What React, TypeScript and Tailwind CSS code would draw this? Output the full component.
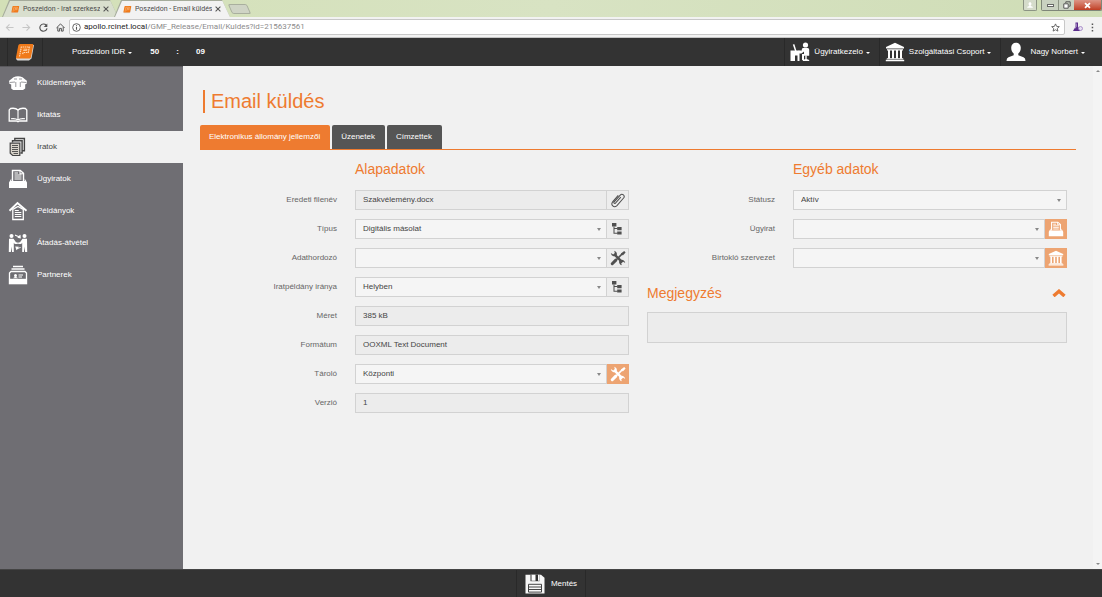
import type { ReactNode } from "react";

type IconProps = { className?: string };
type IconType = (props: IconProps) => ReactNode;

const box = "shrink-0";

function Svg({ className = "size-5", children, view = "0 0 20 20" }: IconProps & { children: ReactNode; view?: string }) {
  return (
    <svg viewBox={view} className={`${box} ${className}`} fill="none" stroke="currentColor" strokeWidth="1.4" aria-hidden="true">
      {children}
    </svg>
  );
}

const LogoIcon: IconType = ({ className }) => (
  <Svg className={className}>
    <path d="M5 3.500 19 3l-2.500 13.500L14 18.500H2.500L1 17z" fill="#d9d9d9" stroke="none" />
    <path d="M5 2h12.500q1 0 .8 1l-2.300 12q-.3 1.500-1.500 1.500H2q-1.200 0-1-1.200L3.300 3.500Q3.600 2 5 2z" fill="#f07a1a" stroke="none" />
    <path d="M4.500 14.500 6.300 5h8l-1 5.500H8l-.4 2" stroke="#ffd9b5" strokeWidth="1.200" strokeDasharray="1.500 .7" />
    <path d="M8.500 7.200h3.500l-.3 1.300H8.200" stroke="#ffd9b5" strokeWidth=".8" />
  </Svg>
);

const DeskIcon: IconType = ({ className }) => (
  <Svg className={className}>
    <g fill="currentColor" stroke="none">
      <circle cx="15.500" cy="3" r="2.600" />
      <path d="M12.500 6h5.200q1.500 0 1.500 1.700v6h-5.200v4.300h-2v-6h2V9.500L11.500 11.500 8 10l.7-1.500 2.300.9z" />
      <path d="M.5 8.500h10.500v3H9.500V19h-2v-5.500H5V19H.500z" />
      <path d="m2.800 2.500 1.600-.3L6.500 9H5z" />
      <path d="M15.300 13.500h1.400V17l2.500 1v1h-6.400v-1l2.500-1z" />
    </g>
  </Svg>
);

const BankIcon: IconType = ({ className }) => (
  <Svg className={className}>
    <g fill="currentColor" stroke="none">
      <path d="M10 .8 19 5v1.500H1V5zM2 7.200h16v1.200H2zM1.800 16.200h16.400v1H1.800zM.8 17.800h18.400v1.500H.8z" />
      <path d="M3 8h2v8.500H3zM7 8h2v8.500H7zM11 8h2v8.500h-2zM15 8h2v8.500h-2z" />
    </g>
  </Svg>
);

const UserIcon: IconType = ({ className }) => (
  <Svg className={className}>
    <path
      d="M10 .8c3 0 4.800 2 4.800 5 0 2.700-1.100 4.600-2.500 5.700v1.700l5.200 2q2 .8 2 3.800H.5q0-3 2-3.800l5.200-2v-1.700C6.300 10.400 5.200 8.500 5.200 5.800c0-3 1.800-5 4.800-5z"
      fill="currentColor"
      stroke="none"
    />
  </Svg>
);

const ParcelIcon: IconType = ({ className }) => (
  <Svg className={className}>
    <path d="M5.500 4.200Q10 2.500 14.500 4.200l4 3.300q1 1.500.3 3L17 11.500H3l-1.800-1q-.7-1.500.3-3z" fill="currentColor" stroke="none" />
    <path d="M3.200 11h14v4.500L15 17H5.200l-2-1.500z" fill="currentColor" stroke="none" />
    <path d="M6 6h3M11 6h3M1.500 9.500 7 9M18.500 9.500 13 9M7.800 9v5M12.300 9v5" stroke="#6f6e73" strokeWidth=".7" />
  </Svg>
);

const BookIcon: IconType = ({ className }) => (
  <Svg className={className}>
    <path d="M10 5C8.500 3.500 5.500 3 2.500 3.500L1.200 5v11H8.500l1.500.8 1.500-.8h7.300V5l-1.300-1.500C14.500 3 11.500 3.500 10 5z" strokeWidth="1.300" />
    <path d="M10 5v9.500M3 13.800q4.500-.7 7 1.200 2.500-1.900 7-1.200" strokeWidth="1.100" />
  </Svg>
);

const PapersIcon: IconType = ({ className }) => (
  <Svg className={className}>
    <path d="M2.200 6.200h9.600v12.300H4.700l-2.500-2.300z" fill="#d8d3ca" strokeWidth="1.200" />
    <path d="M4.500 5.500v-1.700h9.600v12.200h-1.700M6.800 3.200V1.500h9.600v12.300h-1.700" strokeWidth="1.400" />
    <path d="M4 8.500h6M4 10.500h6M4 12.500h6M4 14.500h6M5.500 16.500H10" strokeWidth=".9" />
  </Svg>
);

const TrayIcon: IconType = ({ className }) => (
  <Svg className={className}>
    <path d="M4.500 12V1.500h7.800l3.200 2.800V12" strokeWidth="1.400" />
    <path d="M12 1.500v3.200h3.500M6.500 4h3.500M6.500 6h7M6.500 8h7M6.500 10h7" strokeWidth="1.100" />
    <path d="M3.300 9.500 1 13.500V19h18v-5.500l-2.300-4V12H3.300z" fill="currentColor" stroke="none" />
  </Svg>
);

const HouseDocIcon: IconType = ({ className }) => (
  <Svg className={className}>
    <path d="M1.500 9.800 9.500 2l9 7.800" strokeWidth="1.900" />
    <path d="M4.800 8.500v10h10.500v-10L10 5.500z" strokeWidth="1.300" />
    <path d="M6.800 9.500h4M6.800 11.500h6.500M6.800 13.500h6.500M6.800 15.500h6.500" strokeWidth="1" />
  </Svg>
);

const HandoverIcon: IconType = ({ className }) => (
  <Svg className={className}>
    <g fill="currentColor" stroke="none">
      <circle cx="3.500" cy="3" r="2" />
      <circle cx="16.500" cy="3" r="2" />
      <path d="M1 5.700h4.500l2.500 3.500 1.800.2v1.600l-3-.1-1-1.100V19H4v-5.500L2.800 19H.8zM19 5.700h-4.500L12 9.200l-1.800.2v1.600l3-.1 1-1.100V19H16v-5.500l1.200 5.500h2z" />
      <path d="M7 1.500 10.500 3l2-1.200.3 3.700-3.600-.8 1-.8L7 2.800zM12.700 14.800l-3 1.200-1.200 1.200-1.300-3.700 3.700.3-.7.9 2.500-.8z" />
    </g>
  </Svg>
);

const CardsIcon: IconType = ({ className }) => (
  <Svg className={className}>
    <path d="M5 1.500h10M3.500 4h13" strokeWidth="1.300" />
    <path d="M1.500 14V8L3 6.500h14L18.500 8v6" strokeWidth="1.300" />
    <circle cx="7.500" cy="10.500" r="1.500" fill="currentColor" stroke="none" />
    <path d="M5 13.300q2.500-2.600 5 0z" fill="currentColor" stroke="none" />
    <path d="M10.500 10h4.500M10.500 12h3.500" strokeWidth="1" />
    <path d="M.8 13.800h18.400v5.500H.8z" fill="currentColor" stroke="none" />
  </Svg>
);

const ClipIcon: IconType = ({ className }) => (
  <Svg className={className}>
    <path
      d="m13.500 6.500-6.700 7.300c-1.200 1.200-2.700-.2-1.600-1.500l7.600-8.500c2.600-2.600 6.500.8 4.200 3.700l-8.300 9.400c-3.700 3.500-8.500-.6-5.200-4.900l6.800-7.700"
      strokeWidth="1.300"
    />
  </Svg>
);

const TreeIcon: IconType = ({ className }) => (
  <Svg className={className}>
    <g fill="currentColor" stroke="none">
      <path d="M2.500 2.500h5.500v4.500H2.500zM9 7.500h5.500v4H9zM9 13h5.500v4H9z" />
    </g>
    <path d="M5 7v8.200h4.500M5 9.500h4.500" strokeWidth="1.300" />
  </Svg>
);

const ToolsIcon: IconType = ({ className }) => (
  <Svg className={className}>
    <path d="m5.500 5.500 10 10" strokeWidth="3" />
    <path
      d="M5.300.8a4.500 4.500 0 0 1 3 6 4.500 4.500 0 0 1-7.300-3.100l3 1.800L6 3.700zM14.700 19.200a4.500 4.500 0 0 1-3-6 4.500 4.500 0 0 1 7.300 3.100l-3-1.800-2 1.800z"
      fill="currentColor"
      stroke="none"
    />
    <path d="m6 14 9.500-9.500" strokeWidth="2" />
    <path d="m2.800 17.200 4.500-4.500" strokeWidth="3.800" strokeLinecap="round" />
    <path d="m13.700 4.500 4-3.300 1.800 1.800-3.400 3.900z" fill="currentColor" stroke="none" />
  </Svg>
);

const FloppyIcon: IconType = ({ className }) => (
  <Svg className={className}>
    <path d="M.5.800h15.500l3.500 3v15.700H.500z" fill="#f7f7f7" stroke="none" />
    <path d="M5.500.8h9v6.400h-9z" fill="#333" stroke="none" />
    <path d="M6.500.8h4v5.900h-4zM13 .8h1.500v5.900H13z" fill="#fff" stroke="none" />
    <path d="M3.500 10.300h13v7.800h-13zM3.500 13h13M3.500 15.500h13" stroke="#444" strokeWidth="1" />
  </Svg>
);

const Caret = () => <span className="mt-px border-x-2 border-t-2 border-x-transparent border-t-current" aria-hidden="true" />;

/* ---------- Browser window ---------- */

function BrowserTab({ title, active = false }: { title: string; active?: boolean }) {
  const shape = "[clip-path:polygon(7px_0,calc(100%-8px)_0,100%_100%,0_100%)]";
  return (
    <div className={`-mr-1 flex w-[116px] bg-[#a5ab9b] px-px pt-px ${shape}`}>
      <div className={`flex flex-1 items-center pr-3.5 pl-2 text-[#4a4a4a] ${shape} ${active ? "bg-[#f2f2f2]" : "bg-[#d9dfce]"}`}>
        <LogoIcon className="size-[9px]" />
        <span className="ml-[3px] flex-1 overflow-hidden whitespace-nowrap">{title}</span>
        <button aria-label="Lap bezárása" className="ml-0.5 flex size-2 items-center justify-center text-[#555]">
          <Svg className="size-[6px]">
            <path d="m2 2 16 16M18 2 2 18" strokeWidth="3.500" />
          </Svg>
        </button>
      </div>
    </div>
  );
}

function Browser() {
  return (
    <div className="font-[Roboto,'Open_Sans',sans-serif] text-[7px]">
      <div className="flex h-[17px] bg-linear-to-r from-[#d3e0b7] via-[#d8e3c3] to-[#cfddb6] pl-0.5">
        <BrowserTab title="Poszeidon - Irat szerkesz" />
        <BrowserTab title="Poszeidon - Email küldés" active />
        <button aria-label="Új lap" className="mt-1 ml-1 h-[10px] w-[19px] skew-x-[24deg] rounded-xs border border-[#a9af9e] bg-[#cfd4c5]" />
        <div className="ml-auto flex items-start gap-1 text-[#555]">
          <button aria-label="Profil" className="flex h-[11px] w-[14px] items-center justify-center rounded-b-xs border border-t-0 border-[#8c9484] bg-[#d5dccb]">
            <UserIcon className="size-[6px] text-white" />
          </button>
          <div className="flex h-[11px] overflow-hidden rounded-b-xs border border-t-0 border-[#7f8779]">
            <button aria-label="Kis méret" className="flex w-4 items-center justify-center bg-[#c9d1c1]">
              <span className="h-[3px] w-[7px] border border-[#666] bg-white" />
            </button>
            <button aria-label="Előző méret" className="flex w-4 items-center justify-center border-l border-[#8c9484] bg-[#c9d1c1]">
              <Svg className="size-[8px]">
                <path d="M7 5V2h11v11h-3" strokeWidth="2.500" />
                <path d="M2 7h11v11H2z" fill="#fff" strokeWidth="2.500" />
              </Svg>
            </button>
            <button aria-label="Bezárás" className="flex w-[27px] items-center justify-center bg-linear-to-b from-[#dc9384] to-[#c03d22] text-white">
              <Svg className="size-[7px]">
                <path d="m3 3 14 14M17 3 3 17" strokeWidth="5" />
              </Svg>
            </button>
          </div>
        </div>
      </div>
      <div className="flex h-[21px] items-center gap-2 border-b border-[#c4c4c4] bg-[#f2f2f2] pr-2 pl-[5px] text-[#555]">
        <button aria-label="Vissza" className="text-[#c6c6c6]">
          <Svg className="size-[9px]">
            <path d="M19 10H3M10 3l-7 7 7 7" strokeWidth="2.400" />
          </Svg>
        </button>
        <button aria-label="Előre" className="text-[#c6c6c6]">
          <Svg className="size-[9px]">
            <path d="M1 10h16M10 3l7 7-7 7" strokeWidth="2.400" />
          </Svg>
        </button>
        <button aria-label="Frissítés">
          <Svg className="size-[9px]">
            <path d="M16 5a8 8 0 1 0 1.800 7" strokeWidth="2.600" />
            <path d="M18.500 1v8h-8z" fill="currentColor" stroke="none" />
          </Svg>
        </button>
        <button aria-label="Kezdőlap">
          <Svg className="size-[9px]">
            <path d="M1 11 10 2l9 9M4 9v9h4v-6h4v6h4V9" strokeWidth="2.200" />
          </Svg>
        </button>
        <div className="-ml-1 flex h-4 flex-1 items-center rounded-xs border border-[#c8c8c8] bg-white pr-1 pl-0.5">
          <Svg className="size-[9px]">
            <circle cx="10" cy="10" r="8.500" strokeWidth="2" />
            <path d="M10 9v6M10 5v2" strokeWidth="2.400" />
          </Svg>
          <span className="ml-[3px] flex-1 text-[8px] whitespace-nowrap text-[#8b8b8b]">
            <span className="text-[#222]">apollo.rcinet.local</span>/GMF_Release/Email/Kuldes?id=215637561
          </span>
          <Svg className="size-[9px]">
            <path d="m10 2 2.500 5.500 6 .6-4.500 4 1.300 5.900L10 15l-5.300 3L6 12.100l-4.500-4 6-.6z" strokeWidth="1.900" />
          </Svg>
        </div>
        <Svg className="size-[10px] text-[#5b2d8c]">
          <path d="M5 1h5v8l5 9H0l5-9z" fill="currentColor" stroke="none" />
          <path d="M6.500 3v6L4 13" stroke="#d9cbea" />
          <circle cx="15" cy="13" r="4" fill="#e7dff1" stroke="#9c7fc0" strokeWidth="1.600" />
        </Svg>
        <button aria-label="Menü">
          <Svg className="h-[9px] w-[3px]" view="0 0 3 9">
            <path d="M.7.500h1.500v1.500H.7zM.7 3.700h1.500v1.500H.7zM.7 7h1.500v1.500H.7z" fill="currentColor" stroke="none" />
          </Svg>
        </button>
      </div>
    </div>
  );
}

/* ---------- Application ---------- */

function NavMenu({ icon: Icon, label }: { icon: IconType; label: string }) {
  return (
    <button className="flex items-center border-l border-[#292929] pr-[9px] pl-[5px]">
      <Icon className="size-5" />
      <span className="ml-1 whitespace-nowrap">{label}</span>
      <span className="ml-[3px] flex">
        <Caret />
      </span>
    </button>
  );
}

function TopBar() {
  return (
    <header className="flex h-[28px] bg-[#333] pr-2 text-white">
      <a href="#" aria-label="Poszeidon" className="ml-[7px] flex w-9 items-center justify-center border-x border-[#292929]">
        <LogoIcon className="size-5" />
      </a>
      <button className="ml-[29px] flex items-center gap-[3px] pr-1">
        Poszeidon IDR
        <Caret />
      </button>
      <div className="ml-3.5 flex items-center gap-[17px] font-bold">
        <span>50</span>
        <span>:</span>
        <span>09</span>
      </div>
      <div className="ml-auto flex">
        <NavMenu icon={DeskIcon} label="Ügyiratkezelo" />
        <NavMenu icon={BankIcon} label="Szolgáltatási Csoport" />
        <NavMenu icon={UserIcon} label="Nagy Norbert" />
      </div>
    </header>
  );
}

const menu: { label: string; icon: IconType; active?: boolean }[] = [
  { label: "Küldemények", icon: ParcelIcon },
  { label: "Iktatás", icon: BookIcon },
  { label: "Iratok", icon: PapersIcon, active: true },
  { label: "Ügyiratok", icon: TrayIcon },
  { label: "Példányok", icon: HouseDocIcon },
  { label: "Átadás-átvétel", icon: HandoverIcon },
  { label: "Partnerek", icon: CardsIcon },
];

function Sidebar() {
  return (
    <nav className="w-[183px] shrink-0 border-t border-[#5a595d] bg-[#6f6e73]">
      {menu.map(({ label, icon: Icon, active }) => (
        <a
          key={label}
          href="#"
          className={`flex h-8 items-center gap-[9px] pl-2 ${active ? "bg-[#f1f1f1] text-[#444]" : "text-white"}`}
        >
          <Icon className="size-5" />
          {label}
        </a>
      ))}
    </nav>
  );
}

const fieldBox = "h-5 w-full min-w-0 border border-[#d2d2d2] pl-[7px] text-[#444]";

type FieldProps = {
  id: string;
  label: string;
  value?: string;
  select?: boolean;
  icon?: IconType;
  action?: string;
  accent?: boolean;
};

function Field({ id, label, value = "", select, icon: Icon, action, accent }: FieldProps) {
  return (
    <div className="grid grid-cols-3 items-center">
      <label htmlFor={id} className="pr-[9px] text-right whitespace-nowrap text-[#666]">
        {label}
      </label>
      <div className="col-span-2 flex px-[9px]">
        {select ? (
          <div className="relative min-w-0 flex-1">
            <select id={id} defaultValue={value} className={`${fieldBox} block appearance-none bg-[#f5f5f5]`}>
              <option>{value}</option>
            </select>
            <span className="pointer-events-none absolute top-[9px] right-1.5 border-x-2 border-t-[3px] border-x-transparent border-t-[#888]" />
          </div>
        ) : (
          <input id={id} readOnly defaultValue={value} className={`${fieldBox} flex-1 bg-[#ececec] pb-0.5`} />
        )}
        {Icon && (
          <button
            type="button"
            aria-label={action}
            className={`flex h-5 w-[22px] shrink-0 items-center justify-center ${
              accent ? "bg-[#eda472] text-white" : "border border-l-0 border-[#d2d2d2] bg-[#ededed] text-[#505050]"
            }`}
          >
            <Icon className="size-4" />
          </button>
        )}
      </div>
    </div>
  );
}

function SectionTitle({ children }: { children: ReactNode }) {
  return (
    <div className="grid grid-cols-3">
      <h2 className="col-span-2 col-start-2 px-[9px] text-[14px] leading-5 text-[#ee7b30]">{children}</h2>
    </div>
  );
}

function Content() {
  return (
    <main className="flex min-w-0 flex-1 bg-[#f1f1f1]">
      <div className="min-w-0 flex-1 pt-6 pr-[17px] pb-4 pl-[17px]">
        <h1 className="ml-[3px] border-l-2 border-[#ee7b30] pl-1.5 text-[20px] leading-[23px] text-[#ee7b30]">Email küldés</h1>
        <div className="mt-3 border-b border-[#ee7b30]">
          <div role="tablist" className="flex gap-0.5 text-white">
            <button role="tab" aria-selected="true" className="h-6 rounded-t-xs bg-[#ee7b30] pr-2.5 pl-[9px]">
              Elektronikus állomány jellemzői
            </button>
            <button role="tab" aria-selected="false" className="h-6 rounded-t-xs bg-[#555] pr-2.5 pl-[9px]">
              Üzenetek
            </button>
            <button role="tab" aria-selected="false" className="h-6 rounded-t-xs bg-[#555] pr-2.5 pl-[9px]">
              Címzettek
            </button>
          </div>
        </div>
        <form className="mt-[9px] grid grid-cols-2">
          <div>
            <SectionTitle>Alapadatok</SectionTitle>
            <div className="mt-[11px] flex flex-col gap-[9px]">
              <Field id="filename" label="Eredeti filenév" value="Szakvélemény.docx" icon={ClipIcon} action="Csatolmány" />
              <Field id="type" label="Típus" value="Digitális másolat" select icon={TreeIcon} action="Típus választása" />
              <Field id="medium" label="Adathordozó" select icon={ToolsIcon} action="Adathordozó karbantartása" />
              <Field id="direction" label="Iratpéldány iránya" value="Helyben" select icon={TreeIcon} action="Irány választása" />
              <Field id="size" label="Méret" value="385 kB" />
              <Field id="format" label="Formátum" value="OOXML Text Document" />
              <Field id="storage" label="Tároló" value="Központi" select icon={ToolsIcon} action="Tároló karbantartása" accent />
              <Field id="version" label="Verzió" value="1" />
            </div>
          </div>
          <div>
            <SectionTitle>Egyéb adatok</SectionTitle>
            <div className="mt-[11px] flex flex-col gap-[9px]">
              <Field id="status" label="Státusz" value="Aktív" select />
              <Field id="file" label="Ügyirat" select icon={TrayIcon} action="Ügyirat megnyitása" accent />
              <Field id="owner" label="Birtokló szervezet" select icon={BankIcon} action="Szervezet megnyitása" accent />
            </div>
            <section className="mt-[15px] px-[9px] text-[#ee7b30]">
              <div className="flex items-center justify-between">
                <h2 id="notes" className="text-[14px] leading-5">
                  Megjegyzés
                </h2>
                <button type="button" aria-label="Összecsukás">
                  <Svg className="h-2 w-4" view="0 0 16 8">
                    <path d="M2.500 7 8 2.200 13.500 7" strokeWidth="3.400" />
                  </Svg>
                </button>
              </div>
              <textarea
                aria-labelledby="notes"
                readOnly
                className="mt-[9px] block h-[31px] w-full resize-none border border-[#d2d2d2] bg-[#ececec] text-[#444]"
              />
            </section>
          </div>
        </form>
      </div>
      <div className="flex w-[9px] flex-col items-center justify-between bg-[#f4f4f4] py-1" aria-hidden="true">
        <span className="border-x-2 border-b-2 border-x-transparent border-b-[#888]" />
        <span className="border-x-2 border-t-2 border-x-transparent border-t-[#888]" />
      </div>
    </main>
  );
}

export default function App() {
  return (
    <div className="flex min-h-screen flex-col bg-[#f1f1f1] font-['Liberation_Sans',Arial,sans-serif] text-[8px]">
      <Browser />
      <TopBar />
      <div className="flex flex-1">
        <Sidebar />
        <Content />
      </div>
      <footer className="flex h-7 justify-center border-t border-[#444] bg-[#333] text-white">
        <button className="flex items-center gap-1.5 border-x border-[#292929] px-2">
          <FloppyIcon className="size-5" />
          Mentés
        </button>
      </footer>
    </div>
  );
}
